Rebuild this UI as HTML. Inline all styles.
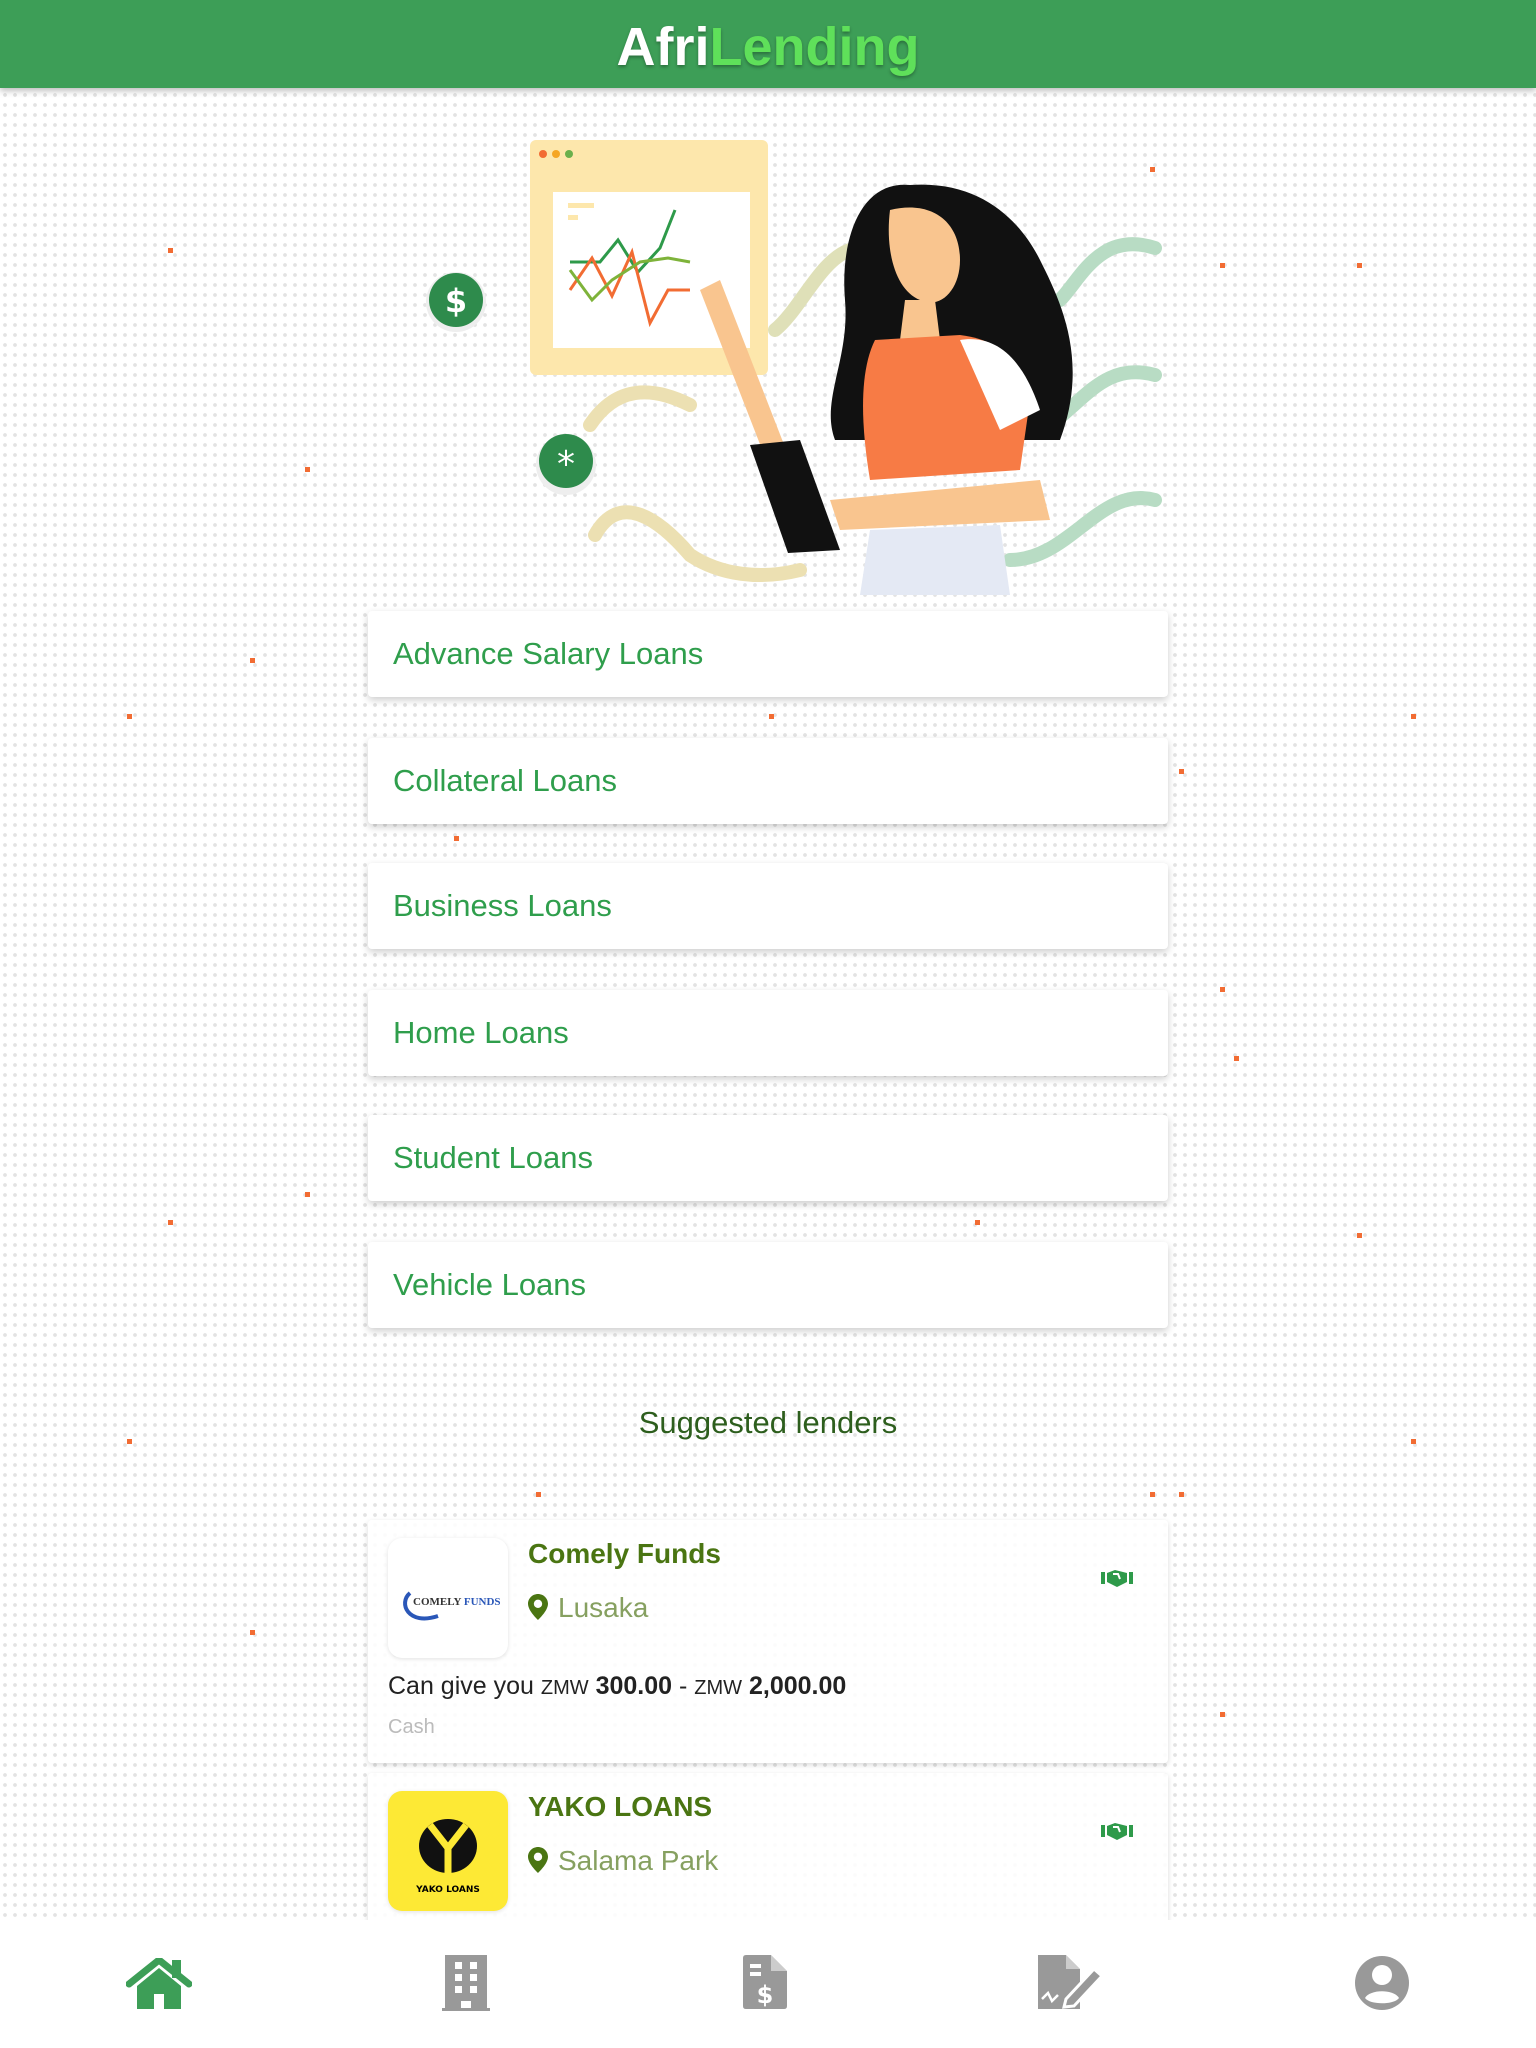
<!DOCTYPE html>
<html><head><meta charset="utf-8">
<style>
*{margin:0;padding:0;box-sizing:border-box}
body{width:1536px;height:2048px;position:relative;overflow:hidden;font-family:"Liberation Sans","DejaVu Sans",sans-serif;
background-color:#fff;
background-image:radial-gradient(circle,#e3e3e3 1.7px,transparent 2.1px);
background-size:10px 10px;}
.hdr{position:absolute;left:0;top:0;width:1536px;height:88px;background:#3d9e57;box-shadow:0 3px 6px rgba(0,0,0,.25);text-align:center;z-index:3}
.hdr span{font-family:"Liberation Sans",sans-serif;font-weight:bold;font-size:54px;line-height:94px;text-shadow:0 2px 3px rgba(0,0,0,.3)}
.btn{position:absolute;left:368px;width:800px;height:86px;background:#fff;border-radius:4px;box-shadow:0 3px 8px rgba(0,0,0,.2);color:#2f9e4c;font-size:31px;line-height:86px;padding-left:25px;font-family:"Liberation Sans",sans-serif}
.od{position:absolute;width:5px;height:5px;background:#f26c33}
.sug{position:absolute;top:1405px;left:0;width:1536px;text-align:center;font-size:31px;color:#2d5e1d;font-family:"Liberation Sans",sans-serif}
.card{position:absolute;left:368px;width:800px;background:rgba(255,255,255,.85);border-radius:4px;box-shadow:0 2px 6px rgba(0,0,0,.15)}
.logo{position:absolute;left:20px;top:18px;width:120px;height:120px;border-radius:14px;background:#fff;box-shadow:0 1px 4px rgba(0,0,0,.12);overflow:hidden}
.nm{position:absolute;left:160px;top:18px;font-size:28px;font-weight:bold;color:#4a7512;font-family:"Liberation Sans",sans-serif}
.loc{position:absolute;left:160px;top:72px;font-size:28px;color:#86a060;font-family:"Liberation Sans",sans-serif}
.hs{position:absolute;left:733px;top:48px}
.nav{position:absolute;left:0;top:1920px;width:1536px;height:128px;background:#fff;z-index:3}
</style></head><body>
<div class="hdr"><span style="color:#fff">Afri</span><span style="color:#5fe05a">Lending</span></div>

<div class="od" style="left:168px;top:248px"></div><div class="od" style="left:1150px;top:167px"></div>
<div class="od" style="left:1220px;top:263px"></div><div class="od" style="left:1357px;top:263px"></div>
<div class="od" style="left:305px;top:467px"></div><div class="od" style="left:250px;top:658px"></div>
<div class="od" style="left:127px;top:714px"></div><div class="od" style="left:769px;top:714px"></div>
<div class="od" style="left:1411px;top:714px"></div><div class="od" style="left:1179px;top:769px"></div>
<div class="od" style="left:454px;top:836px"></div><div class="od" style="left:1220px;top:987px"></div>
<div class="od" style="left:1234px;top:1056px"></div><div class="od" style="left:305px;top:1192px"></div>
<div class="od" style="left:168px;top:1220px"></div><div class="od" style="left:975px;top:1220px"></div>
<div class="od" style="left:1357px;top:1233px"></div><div class="od" style="left:127px;top:1439px"></div>
<div class="od" style="left:1411px;top:1439px"></div><div class="od" style="left:536px;top:1492px"></div>
<div class="od" style="left:1150px;top:1492px"></div><div class="od" style="left:1179px;top:1492px"></div>
<div class="od" style="left:250px;top:1630px"></div><div class="od" style="left:1220px;top:1712px"></div>

<svg style="position:absolute;left:420px;top:130px" width="750" height="470" viewBox="420 130 750 470">
<g fill="none" stroke-linecap="round" stroke-width="14">
<path d="M1155 248 C1100 230 1080 280 1060 300" stroke="#b8dcc4"/>
<path d="M1155 375 C1100 360 1080 410 1040 430" stroke="#b8dcc4"/>
<path d="M1155 500 C1100 485 1070 560 1010 560" stroke="#b8dcc4"/>
<path d="M590 425 C620 380 660 390 690 405" stroke="#ece0b2"/>
<path d="M595 535 C620 490 660 520 690 555 C720 575 760 580 800 570" stroke="#ece0b2"/>
<path d="M775 330 C800 310 820 260 850 250" stroke="#dfe0b8"/>
</g>
<rect x="530" y="140" width="238" height="235" rx="6" fill="#fde7ac"/>
<circle cx="543" cy="154" r="4" fill="#f26c33"/><circle cx="556" cy="154" r="4" fill="#f5a623"/><circle cx="569" cy="154" r="4" fill="#6ab04c"/>
<rect x="553" y="192" width="197" height="156" fill="#fff"/>
<rect x="568" y="203" width="26" height="5" fill="#fde7ac"/><rect x="568" y="215" width="10" height="5" fill="#fde7ac"/>
<polyline points="570,262 600,262 618,240 638,272 660,248 675,210" fill="none" stroke="#2e9a4a" stroke-width="3"/>
<polyline points="570,290 592,258 612,296 632,252 650,323 668,290 690,290" fill="none" stroke="#f26c33" stroke-width="3"/>
<polyline points="570,270 592,300 612,280 640,262 668,258 690,262" fill="none" stroke="#7eb33a" stroke-width="3"/>
<circle cx="456" cy="302" r="30" fill="#eee"/><circle cx="456" cy="300" r="27" fill="#2e8b4c"/>
<text x="456" y="312" fill="#fff" font-size="32" font-weight="bold" text-anchor="middle" font-family="DejaVu Sans">$</text>
<circle cx="566" cy="465" r="30" fill="#eee"/><circle cx="566" cy="461" r="27" fill="#2e8b4c"/>
<text x="566" y="476" fill="#fff" font-size="36" text-anchor="middle" font-family="DejaVu Sans">*</text>
<path d="M910 185 C860 180 840 240 845 300 C850 360 820 400 835 440 L1060 440 C1090 360 1060 300 1040 260 C1020 220 980 180 910 185Z" fill="#111"/>
<path d="M890 210 C930 200 960 220 960 260 C960 290 940 310 920 300 C895 290 885 250 890 210Z" fill="#f9c58f"/>
<path d="M905 300 L935 300 L940 340 L900 340Z" fill="#f9c58f"/>
<path d="M875 340 L960 335 C1000 340 1020 360 1030 400 L1020 470 L870 480 C860 420 860 370 875 340Z" fill="#f77b45"/>
<path d="M960 340 C990 335 1020 350 1040 410 L1000 430 Z" fill="#fff"/>
<path d="M700 290 L720 280 L790 460 L770 470Z" fill="#f9c58f"/>
<path d="M830 500 L1040 480 L1050 520 L840 530Z" fill="#f9c58f"/>
<path d="M750 445 L800 440 L840 550 L788 553Z" fill="#111"/>
<path d="M870 530 L1000 525 L1010 595 L860 595Z" fill="#e4e9f4"/>
</svg>

<div class="btn" style="top:611px">Advance Salary Loans</div>
<div class="btn" style="top:738px">Collateral Loans</div>
<div class="btn" style="top:863px">Business Loans</div>
<div class="btn" style="top:990px">Home Loans</div>
<div class="btn" style="top:1115px">Student Loans</div>
<div class="btn" style="top:1242px">Vehicle Loans</div>

<div class="sug">Suggested lenders</div>

<div class="card" style="top:1520px;height:243px">
 <div class="logo"><svg width="120" height="120"><path d="M22 55 C10 65 20 88 50 78" fill="none" stroke="#2a57b8" stroke-width="4"/><text x="25" y="67" font-size="11" font-weight="bold" fill="#333" font-family="Liberation Serif">COMELY <tspan fill="#2a57b8">FUNDS</tspan></text></svg></div>
 <div class="nm">Comely Funds</div>
 <div class="loc"><svg width="20" height="26" viewBox="0 0 20 26" style="vertical-align:-3px;margin-right:10px"><path d="M10 0C4.5 0 0 4.4 0 9.8 0 17 10 26 10 26s10-9 10-16.2C20 4.4 15.5 0 10 0zm0 14a4.2 4.2 0 110-8.4 4.2 4.2 0 010 8.4z" fill="#4a7512"/></svg>Lusaka</div>
 <svg class="hs" width="32" height="20"><rect x="0" y="4" width="4" height="12" fill="#2e9a4a"/><rect x="28" y="4" width="4" height="12" fill="#2e9a4a"/><path d="M6 5 L14 2 L26 5 L26 14 L16 19 L6 14Z" fill="#2e9a4a"/><path d="M12 6 L17 6 L19 11" stroke="#fff" stroke-width="2" fill="none"/></svg>
 <div style="position:absolute;left:20px;top:152px;font-size:25px;color:#222;font-family:'Liberation Sans',sans-serif">Can give you <span style="font-size:20px">ZMW</span> <b>300.00</b> - <span style="font-size:20px">ZMW</span> <b>2,000.00</b></div>
 <div style="position:absolute;left:20px;top:196px;font-size:20px;color:#bbb;font-family:'Liberation Sans',sans-serif">Cash</div>
</div>

<div class="card" style="top:1773px;height:200px">
 <div class="logo" style="background:#fde935"><svg width="120" height="120"><ellipse cx="60" cy="55" rx="29" ry="27" fill="#111"/><path d="M42 34 L60 57 L78 34 M60 57 L60 82" stroke="#fde935" stroke-width="7" fill="none"/><text x="60" y="101" font-size="9" font-weight="bold" text-anchor="middle" font-family="DejaVu Sans">YAKO LOANS</text></svg></div>
 <div class="nm">YAKO LOANS</div>
 <div class="loc"><svg width="20" height="26" viewBox="0 0 20 26" style="vertical-align:-3px;margin-right:10px"><path d="M10 0C4.5 0 0 4.4 0 9.8 0 17 10 26 10 26s10-9 10-16.2C20 4.4 15.5 0 10 0zm0 14a4.2 4.2 0 110-8.4 4.2 4.2 0 010 8.4z" fill="#4a7512"/></svg>Salama Park</div>
 <svg class="hs" width="32" height="20"><rect x="0" y="4" width="4" height="12" fill="#2e9a4a"/><rect x="28" y="4" width="4" height="12" fill="#2e9a4a"/><path d="M6 5 L14 2 L26 5 L26 14 L16 19 L6 14Z" fill="#2e9a4a"/><path d="M12 6 L17 6 L19 11" stroke="#fff" stroke-width="2" fill="none"/></svg>
</div>

<div class="nav">
 <svg style="position:absolute;left:126px;top:38px" width="66" height="52" viewBox="0 0 66 52"><path d="M3 26 L33 2 L63 26" stroke="#3d9e57" stroke-width="7" fill="none" stroke-linecap="round" stroke-linejoin="round"/><rect x="46" y="2" width="9" height="18" fill="#3d9e57"/><path d="M11 28 L33 10 L55 28 L55 51 L38 51 L38 36 L28 36 L28 51 L11 51Z" fill="#3d9e57"/></svg>
 <svg style="position:absolute;left:442px;top:35px" width="48" height="56" viewBox="0 0 48 56"><path d="M3 0 H45 V53 H48 V56 H0 V53 H3Z M19 46 V53 H29 V46Z" fill="#999"/><g fill="#fff"><rect x="13" y="7" width="7" height="7"/><rect x="28" y="7" width="7" height="7"/><rect x="13" y="19" width="7" height="7"/><rect x="28" y="19" width="7" height="7"/><rect x="13" y="31" width="7" height="7"/><rect x="28" y="31" width="7" height="7"/></g></svg>
 <svg style="position:absolute;left:743px;top:35px" width="44" height="54" viewBox="0 0 44 54"><path d="M0 3 Q0 0 3 0 H28 L44 16 V51 Q44 54 41 54 H3 Q0 54 0 51Z" fill="#999"/><path d="M28 0 V16 H44" fill="#fff" opacity=".5"/><rect x="7" y="9" width="11" height="4" fill="#fff"/><rect x="7" y="17" width="11" height="4" fill="#fff"/><text x="22" y="48" font-size="24" font-weight="bold" fill="#fff" text-anchor="middle" font-family="DejaVu Sans">$</text></svg>
 <svg style="position:absolute;left:1038px;top:35px" width="66" height="54" viewBox="0 0 66 54"><path d="M0 0 H28 L42 14 V54 H0Z" fill="#999"/><path d="M28 0 V14 H42" fill="#fff" opacity=".5"/><path d="M28 44 L56 14 L64 21 L36 51 L26 52Z" fill="#999" stroke="#fff" stroke-width="3"/><path d="M4 44 L10 38 L14 46 L20 40" stroke="#fff" stroke-width="2.5" fill="none"/></svg>
 <svg style="position:absolute;left:1354px;top:35px" width="56" height="56" viewBox="0 0 56 56"><circle cx="28" cy="28" r="27" fill="#999"/><circle cx="28" cy="20" r="10" fill="#fff"/><path d="M11 43 C16 34 40 34 45 43 C40 50 16 50 11 43Z" fill="#fff"/></svg>
</div>
</body></html>
